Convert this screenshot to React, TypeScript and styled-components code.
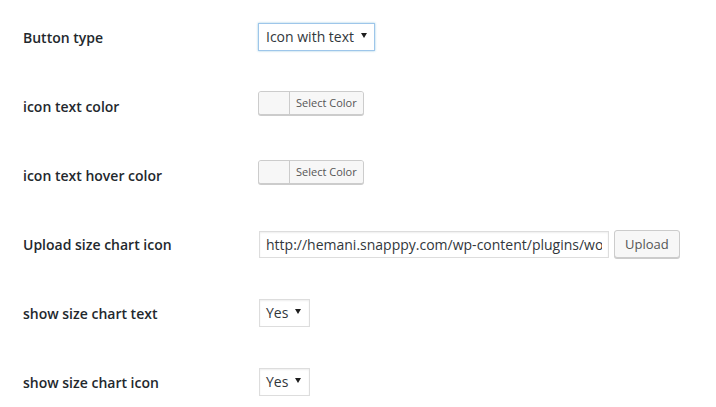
import React from "react";
import styled, { createGlobalStyle } from "styled-components";

const Global = createGlobalStyle`
  html, body { margin: 0; padding: 0; background: #fff; }
  body { font-family: "Open Sans", "Liberation Sans", sans-serif; color: #444; }
  * { box-sizing: border-box; }
`;

const Page = styled.div`
  padding: 9px 0 0 23px;
  width: 716px;
`;

const Row = styled.div`
  display: grid;
  grid-template-columns: 235px 1fr;
  height: 69px;
`;

const Label = styled.div`
  padding-top: 20px;
  font-size: 14px;
  line-height: 18.2px;
  font-weight: 600;
  color: #23282d;
`;

const Field = styled.div<{ $top: number; $left?: number }>`
  display: flex;
  align-items: flex-start;
  gap: 5px;
  padding-top: ${(p) => p.$top}px;
  padding-left: ${(p) => p.$left ?? 0}px;
`;

const Select = styled.div<{ $width: number; $focused?: boolean; $pl: number; $pr: number }>`
  display: flex;
  align-items: center;
  justify-content: space-between;
  width: ${(p) => p.$width}px;
  height: 28px;
  padding: 0 ${(p) => p.$pr}px 0 ${(p) => p.$pl}px;
  background: #fff;
  border: 1px solid ${(p) => (p.$focused ? "#9ec6ea" : "#ddd")};
  box-shadow: ${(p) =>
    p.$focused ? "0 0 2px rgba(30,140,190,.45)" : "inset 0 1px 2px rgba(0,0,0,.07)"};
  font-size: 14px;
  color: #32373c;
  line-height: 26px;
`;

const Arrow = styled.span`
  width: 0;
  height: 0;
  border-left: 3px solid transparent;
  border-right: 3px solid transparent;
  border-top: 5px solid #1e1e1e;
  margin-top: -3px;
`;

const ColorButton = styled.div`
  display: flex;
  height: 24px;
  background: #f7f7f7;
  border: 1px solid #ccc;
  border-radius: 3px;
  box-shadow: 0 1px 0 #ccc;
  overflow: hidden;
`;

const Swatch = styled.span`
  width: 30px;
  background: #f7f7f7;
`;

const ColorText = styled.span`
  border-left: 1px solid #ccc;
  padding: 0 6px;
  font-size: 11px;
  line-height: 22px;
  color: #555;
  background: #f7f7f7;
`;

const TextInput = styled.input`
  width: 350px;
  height: 27px;
  margin-top: 1px;
  padding: 0 6px;
  border: 1px solid #ddd;
  box-shadow: inset 0 1px 2px rgba(0,0,0,.07);
  background: #fff;
  font-family: "Open Sans", "Liberation Sans", sans-serif;
  font-size: 14px;
  color: #32373c;
  outline: none;
`;

const Button = styled.div`
  height: 28px;
  padding: 0 10px;
  border: 1px solid #ccc;
  border-radius: 3px;
  background: #f7f7f7;
  box-shadow: 0 1px 0 #ccc;
  font-size: 13px;
  line-height: 26px;
  color: #555;
`;

export default function App() {
  return (
    <Page>
      <Global />
      <Row>
        <Label>Button type</Label>
        <Field $top={14}>
          <Select $width={117} $focused $pl={7} $pr={7}>
            <span>Icon with text</span>
            <Arrow />
          </Select>
        </Field>
      </Row>
      <Row>
        <Label>icon text color</Label>
        <Field $top={13}>
          <ColorButton>
            <Swatch />
            <ColorText>Select Color</ColorText>
          </ColorButton>
        </Field>
      </Row>
      <Row>
        <Label>icon text hover color</Label>
        <Field $top={13}>
          <ColorButton>
            <Swatch />
            <ColorText>Select Color</ColorText>
          </ColorButton>
        </Field>
      </Row>
      <Row>
        <Label>Upload size chart icon</Label>
        <Field $top={14} $left={1}>
          <TextInput
            readOnly
            defaultValue="http://hemani.snapppy.com/wp-content/plugins/woocommerce-size-chart/assets/images/size-chart-icon.png"
          />
          <Button>Upload</Button>
        </Field>
      </Row>
      <Row>
        <Label>show size chart text</Label>
        <Field $top={14} $left={1}>
          <Select $width={51} $pl={6} $pr={8}>
            <span>Yes</span>
            <Arrow />
          </Select>
        </Field>
      </Row>
      <Row>
        <Label>show size chart icon</Label>
        <Field $top={14} $left={1}>
          <Select $width={51} $pl={6} $pr={8}>
            <span>Yes</span>
            <Arrow />
          </Select>
        </Field>
      </Row>
    </Page>
  );
}
